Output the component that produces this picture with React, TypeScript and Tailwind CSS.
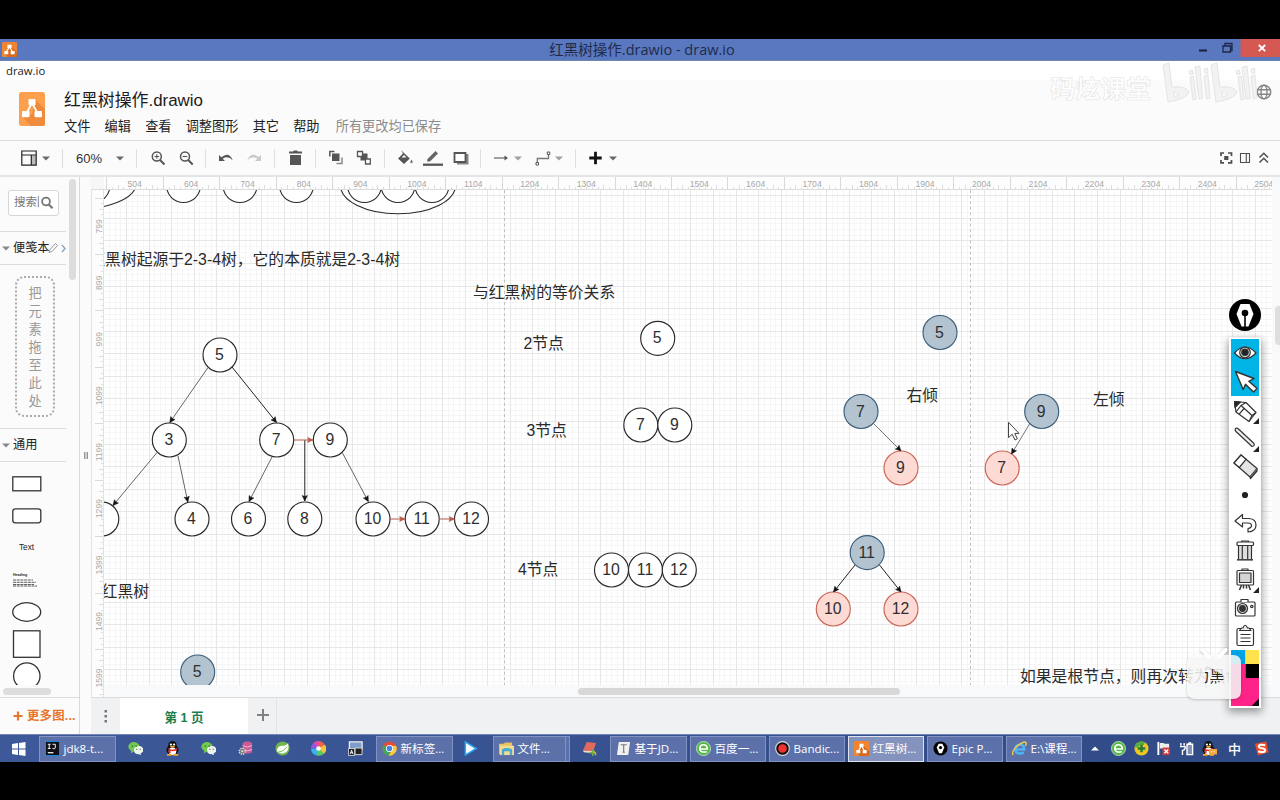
import React from "react";

type Tone = "plain" | "blue" | "red";
type DiagramNode = { x: number; y: number; label?: string; tone?: Tone };
type Edge = { from: [number, number]; to: [number, number]; color?: string };

const range = (n: number) => Array.from({ length: n }, (_, i) => i);

const tones: Record<Tone, { fill: string; stroke: string }> = {
  plain: { fill: "#ffffff", stroke: "#2a2a2a" },
  blue: { fill: "#b3c4d0", stroke: "#3c5f7c" },
  red: { fill: "#fedad5", stroke: "#cb6657" },
};

const nodes: DiagramNode[] = [
  { x: 220, y: 355, label: "5" },
  { x: 169.3, y: 440, label: "3" },
  { x: 276.7, y: 440, label: "7" },
  { x: 330.3, y: 440, label: "9" },
  { x: 101.8, y: 519 },
  { x: 192, y: 519, label: "4" },
  { x: 248.5, y: 519, label: "6" },
  { x: 304.8, y: 519, label: "8" },
  { x: 373, y: 519, label: "10" },
  { x: 422.2, y: 519, label: "11" },
  { x: 471.5, y: 519, label: "12" },
  { x: 657.7, y: 338.3, label: "5" },
  { x: 640.8, y: 425, label: "7" },
  { x: 674.8, y: 425, label: "9" },
  { x: 611.5, y: 570, label: "10" },
  { x: 645.5, y: 570, label: "11" },
  { x: 679.3, y: 570, label: "12" },
  { x: 197.7, y: 672, label: "5", tone: "blue" },
  { x: 940, y: 332.5, label: "5", tone: "blue" },
  { x: 861, y: 411.5, label: "7", tone: "blue" },
  { x: 901, y: 468, label: "9", tone: "red" },
  { x: 1041.7, y: 411.5, label: "9", tone: "blue" },
  { x: 1002.2, y: 468, label: "7", tone: "red" },
  { x: 867.2, y: 552.6, label: "11", tone: "blue" },
  { x: 833.3, y: 609, label: "10", tone: "red" },
  { x: 901, y: 609, label: "12", tone: "red" },
];

const edges: Edge[] = [
  { from: [208, 367.5], to: [169.8, 422.5], color: "#666" },
  { from: [232, 367], to: [276.5, 422.5], color: "#222" },
  { from: [157, 452.5], to: [113, 505.5], color: "#666" },
  { from: [178, 456], to: [187.8, 502], color: "#666" },
  { from: [272, 457], to: [249, 501.5], color: "#666" },
  { from: [342.5, 453], to: [368.3, 501.5], color: "#666" },
  { from: [304.8, 440], to: [304.8, 501], color: "#222" },
  { from: [294, 440], to: [313, 440], color: "#b55a4c" },
  { from: [390, 519], to: [405, 519], color: "#b55a4c" },
  { from: [439, 519], to: [454.5, 519], color: "#b55a4c" },
  { from: [874, 424], to: [901, 451], color: "#777" },
  { from: [1029.5, 424], to: [1011.5, 454], color: "#777" },
  { from: [855, 565], to: [833.5, 592], color: "#222" },
  { from: [879.5, 565], to: [901, 592], color: "#222" },
];

function EdgeLine({ from, to, color = "#222" }: Edge) {
  const angle = (Math.atan2(to[1] - from[1], to[0] - from[0]) * 180) / Math.PI;
  const head = color === "#b55a4c" ? color : "#111";
  return (
    <g>
      <line x1={from[0]} y1={from[1]} x2={to[0]} y2={to[1]} stroke={color} strokeWidth="1" />
      <path
        d="M0 0L-5.4 -2.6L-4.6 0L-5.4 2.6Z"
        fill={head}
        stroke={head}
        strokeWidth=".5"
        transform={`translate(${to[0]} ${to[1]}) rotate(${angle})`}
      />
    </g>
  );
}

function Label({ x, y, children, anchor = "start" }: { x: number; y: number; children: string; anchor?: "start" | "end" }) {
  return (
    <text x={x} y={y} textAnchor={anchor} fontSize="15.8" fill="#2a2a2a">
      {children}
    </text>
  );
}

const GRID = 22.58;

function gridPath(steps: number[], start: number, kind: "v" | "h") {
  return steps
    .map((i) => {
      const p = Math.floor(start + (GRID / 4) * i) + 0.5;
      return kind === "v" ? `M${p} 190V685` : `M104 ${p}H1272`;
    })
    .join("");
}

function Grid() {
  const cols = range(208);
  const rows = range(88);
  const isMajor = (i: number) => i % 4 === 0;
  return (
    <g fill="none" strokeWidth="1">
      <path d={gridPath(cols.filter((i) => !isMajor(i)), 103.9, "v") + gridPath(rows.filter((i) => !isMajor(i)), 195.7, "h")} stroke="#f6f6f6" />
      <path d={gridPath(cols.filter(isMajor), 103.9, "v") + gridPath(rows.filter(isMajor), 195.7, "h")} stroke="#e7e7e7" />
    </g>
  );
}

function Canvas() {
  return (
    <svg viewBox="104 190 1168 495" className="block h-[495px] w-[1168px] bg-white font-['Liberation_Sans','Noto_Sans_CJK_SC',sans-serif]">
      <Grid />
      <path d="M504.500 190V685M970.500 190V685" stroke="#c0c0c0" strokeDasharray="3 2.6" />
      <g fill="#fff" stroke="#2a2a2a" strokeWidth="1.1">
        <ellipse cx="75" cy="184" rx="61" ry="25.5" />
        <circle cx="93" cy="185.5" r="17" />
        <circle cx="183.5" cy="185.5" r="17" />
        <circle cx="240" cy="185.5" r="17" />
        <circle cx="296.5" cy="185.5" r="17" />
        <ellipse cx="398" cy="185.5" rx="57.5" ry="28.3" />
        <circle cx="364.5" cy="185.5" r="17" />
        <circle cx="398" cy="185.5" r="17" />
        <circle cx="432" cy="185.5" r="17" />
      </g>
      {nodes.map((n, i) => {
        const tone = tones[n.tone ?? "plain"];
        return (
          <g key={i}>
            <circle cx={n.x} cy={n.y} r="17" fill={tone.fill} stroke={tone.stroke} strokeWidth="1.15" />
            {n.label && (
              <text x={n.x - 0.5} y={n.y + 5} textAnchor="middle" fontSize="15.8" fill="#2f2f2f">
                {n.label}
              </text>
            )}
          </g>
        );
      })}
      {edges.map((e, i) => (
        <EdgeLine key={i} {...e} />
      ))}
      <Label x={400} y={265} anchor="end">红黑树起源于2-3-4树，它的本质就是2-3-4树</Label>
      <Label x={473} y={298}>与红黑树的等价关系</Label>
      <Label x={523.5} y={349}>2节点</Label>
      <Label x={526.5} y={435.500}>3节点</Label>
      <Label x={518} y={575}>4节点</Label>
      <Label x={149} y={596.500} anchor="end">红黑树</Label>
      <Label x={906.5} y={400.500}>右倾</Label>
      <Label x={1093} y={404.500}>左倾</Label>
      <Label x={1020} y={682}>如果是根节点，则再次转为黑色</Label>
      <path d="M1008.5 422.3V437.6L1012.2 434.3L1015 440L1017.3 438.8L1014.8 433.4H1019Z" fill="#fff" stroke="#444" strokeWidth="1" />
    </svg>
  );
}

function TopRuler() {
  return (
    <svg viewBox="91 177 1181 13" className="block h-[13px] w-[1181px] bg-[#fdfdfd] font-['Liberation_Sans',sans-serif]">
      <rect x="91" y="177" width="13" height="13" fill="#f6f6f6" />
      {range(21).map((k) => {
        const x = 106.9 + 56.46 * k;
        return (
          <g key={k}>
            <path d={`M${Math.floor(x) + 0.5} 177V190`} stroke="#d8d8d8" />
            {range(9).map((j) => (
              <path key={j} d={`M${Math.floor(x + 5.646 * (j + 1)) + 0.5} ${j % 2 ? 185 : 187}V190`} stroke="#dedede" />
            ))}
            <text x={x + 27.7} y="187.300" fontSize="8.600" textAnchor="middle" fill="#a8a8a8" stroke="#fdfdfd" strokeWidth="1.500" paintOrder="stroke">
              {504 + 100 * k}
            </text>
          </g>
        );
      })}
      <path d="M91 189.500H1272" stroke="#dcdcdc" />
    </svg>
  );
}

function SideRuler() {
  return (
    <svg viewBox="91 190 13 507" className="block h-[507px] w-[13px] bg-[#fdfdfd] font-['Liberation_Sans',sans-serif]">
      {range(9).map((k) => {
        const y = 198 + 56.46 * k;
        return (
          <g key={k}>
            <path d={`M95 ${Math.floor(y) + 0.5}H104`} stroke="#dadada" />
            {range(9).map((j) => (
              <path key={j} d={`M${j % 2 ? 99 : 101} ${Math.floor(y + 5.646 * (j + 1)) + 0.5}H104`} stroke="#dedede" />
            ))}
            <text transform={`translate(101.5 ${y + 28.3}) rotate(-90)`} fontSize="8.600" textAnchor="middle" fill="#a8a8a8" stroke="#fdfdfd" strokeWidth="1.500" paintOrder="stroke">
              {799 + 100 * k}
            </text>
          </g>
        );
      })}
      <path d="M103.500 190V697M91.500 190V697" stroke="#e2e2e2" />
    </svg>
  );
}

function DrawioGlyph({ className }: { className: string }) {
  return (
    <svg viewBox="0 0 16 16" className={className}>
      <rect width="16" height="16" rx="1" fill="#f08431" />
      <path d="M10 5L16 11V16H6L3 12Z" fill="#d9691c" />
      <path d="M8 5L4.5 11M8 5L11.500 11" stroke="#fff" strokeWidth="1.3" />
      <path d="M5.800 3H10.200V6.500H5.800ZM2.500 9.500H6.700V13H2.500ZM9.300 9.500H13.500V13H9.300Z" fill="#fff" />
    </svg>
  );
}

function TitleBar() {
  return (
    <div className="flex h-[22px] shrink-0 border-b border-[#7186ae] bg-[#5a78c0] text-[#202b4a]">
      <div className="flex w-[60px] items-start pl-[2px] pt-[3px]">
        <DrawioGlyph className="size-[15px]" />
      </div>
      <div className="flex-1 pl-[4px] text-center text-[14.500px] leading-[21px]">红黑树操作.drawio - draw.io</div>
      <svg viewBox="1190 39 90 21" className="-ml-[30px] h-[21px] w-[90px]">
        <rect x="1240.500" y="39" width="40" height="18" fill="#d45953" />
        <path d="M1199 50.500H1207" stroke="#1c2747" strokeWidth="2.200" />
        <path d="M1223 46H1230.500V52H1223ZM1225 45.500V43.500H1232V50.500H1230.500" stroke="#1c2747" strokeWidth="1.300" fill="none" />
        <path d="M1258.800 45L1265.200 51.200M1265.200 45L1258.800 51.200" stroke="#fff" strokeWidth="1.800" />
      </svg>
    </div>
  );
}

function Watermark() {
  return (
    <div className="absolute left-[1050px] top-[60px] flex h-[48px] w-[210px] items-start">
      <span className="w-[110px] pt-[16px] text-[25.300px] font-bold leading-[24px] text-white [-webkit-text-stroke:0.5px_#e2e2e2]">码炫课堂</span>
      <svg viewBox="1160 60 98 48" className="h-[48px] w-[98px]">
        <g fill="#f2f2f2" stroke="#e0e0e0" strokeWidth=".8" strokeLinejoin="round">
          <path d="M1163 65L1169 63L1172 87Q1187 86 1189 92Q1187 99 1168 102Z" />
          <path d="M1173.500 92L1179 94.500L1175 97Z" fill="#fff" />
          <path d="M1211 65L1217 63L1220 87Q1235 86 1237 92Q1235 99 1216 102Z" />
          <path d="M1222 92L1227.500 94.500L1223 97Z" fill="#fff" />
          <path d="M1190 77L1193.500 76L1196 99L1193 100ZM1195 67L1200 66L1202.500 98L1199 99ZM1204 76L1208 75L1210 98L1206.500 99ZM1189 71L1192.500 70L1193.300 74L1190 74.500ZM1204 69L1207.500 68L1208 73L1205 73.500Z" />
          <path d="M1238 77L1241.500 76L1244 99L1241 100ZM1242 67L1247 66L1250.500 98L1246 99ZM1251 76L1255 75L1257 98L1253.500 99ZM1236 71L1239.500 70L1240.300 74L1237 74.500ZM1251 69L1254.500 68L1255 73L1252 73.500Z" />
        </g>
      </svg>
    </div>
  );
}

function Header() {
  const menus = ["文件", "编辑", "查看", "调整图形", "其它", "帮助"];
  return (
    <div className="flex h-[61px] shrink-0 border-b border-[#dedede] bg-[#fbfbfb] text-[#1c1c1c]">
      <svg viewBox="0 0 26 34" className="ml-[19px] mt-[12px] h-[34px] w-[26px]">
        <rect width="26" height="34" rx="2.500" fill="#fca04d" />
        <path d="M16.500 8L26 17V31.500Q26 34 23.500 34H12L4 25.500L13 22Z" fill="#ee8b3d" />
        <path d="M13 11L7 22M13 11L19 22" stroke="#fff" strokeWidth="1.700" />
        <rect x="9.500" y="7" width="7" height="6.500" rx="1" fill="#fff" />
        <rect x="3" y="19" width="7.500" height="6.300" rx="1" fill="#fff" />
        <rect x="15.500" y="19" width="7.500" height="6.300" rx="1" fill="#fff" />
      </svg>
      <div className="ml-[19px] flex-1">
        <div className="mt-[10px] h-[22px] text-[16.900px] leading-[22px]">红黑树操作.drawio</div>
        <div className="mt-[5px] flex gap-[14.200px] text-[13.200px] leading-[19px]">
          {menus.map((m) => (
            <span key={m}>{m}</span>
          ))}
          <span className="ml-[2px] text-[#8b8b8b]">所有更改均已保存</span>
        </div>
      </div>
      <svg viewBox="0 0 16 16" className="mr-[8px] mt-[4px] size-[16px]" fill="none" stroke="#858585" strokeWidth="1.400">
        <circle cx="8" cy="8" r="6.700" />
        <ellipse cx="8" cy="8" rx="3" ry="6.700" />
        <path d="M1.500 5.700H14.500M1.500 10.300H14.500" />
      </svg>
    </div>
  );
}

function Caret({ className, color = "#6a6a6a" }: { className: string; color?: string }) {
  return (
    <svg viewBox="0 0 8 5" className={`h-[5px] w-[8px] shrink-0 ${className}`}>
      <path d="M0 .5H8L4 4.500Z" fill={color} />
    </svg>
  );
}

function Sep({ className }: { className: string }) {
  return <div className={`h-[19px] w-px shrink-0 bg-[#dfdfdf] ${className}`} />;
}

function Tool({ className, children, w = 16 }: { className: string; children: React.ReactNode; w?: number }) {
  return (
    <svg viewBox={`0 0 ${w} 18`} className={`h-[18px] shrink-0 ${className}`} fill="none" stroke="#555" strokeWidth="1.500">
      {children}
    </svg>
  );
}

function Toolbar() {
  return (
    <div className="flex h-[36px] shrink-0 items-center border-b-2 border-[#e4e4e4] bg-[#fbfbfb]">
      <Tool className="ml-[21px] w-[16px]">
        <path d="M10.500 6.500H15V16H10.500Z" fill="#bbb" stroke="none" />
        <path d="M.8 2H15.200V16.200H.8ZM.8 6H15.200M10.300 6V16" stroke="#222" strokeWidth="1.200" />
      </Tool>
      <Caret className="ml-[5px]" />
      <Sep className="ml-[12px]" />
      <span className="ml-[13px] w-[28px] pt-px font-['Liberation_Sans',sans-serif] text-[13px] text-[#333]">60%</span>
      <Caret className="ml-[12px]" />
      <Sep className="ml-[12px]" />
      <Tool className="ml-[14px] w-[16px]">
        <circle cx="5.800" cy="7.500" r="4.500" />
        <path d="M9 11L13.500 15.500" strokeWidth="2" />
        <path d="M3.500 7.500H8.100M5.800 5.200V9.800" strokeWidth="1.100" />
      </Tool>
      <Tool className="ml-[12px] w-[16px]">
        <circle cx="6" cy="7.500" r="4.500" />
        <path d="M9.200 11L13.700 15.500" strokeWidth="2" />
        <path d="M3.700 7.500H8.300" strokeWidth="1.100" />
      </Tool>
      <Sep className="ml-[10px]" />
      <Tool className="ml-[12px] w-[16px]">
        <path d="M1 6V12H7L4.700 9.700Q10 6 14.800 11.500Q11 2 3.400 8.300Z" fill="#555" stroke="none" />
      </Tool>
      <Tool className="ml-[12px] w-[16px]">
        <path d="M15 6V12H9L11.300 9.700Q6 6 1.200 11.500Q5 2 12.600 8.300Z" fill="#c8c8c8" stroke="none" />
      </Tool>
      <Sep className="ml-[12px]" />
      <Tool className="ml-[13px] w-[16px]">
        <path d="M1 2.500H5L6 1.500H9L10 2.500H14V4.500H1ZM2 6H13V16H2Z" fill="#555" stroke="none" />
      </Tool>
      <Sep className="ml-[11px]" />
      <Tool className="ml-[12px] w-[16px]">
        <path d="M1.800 7.500V2.500H6.500" />
        <path d="M4 4.500H11.500V12H4Z" fill="#555" stroke="none" />
        <path d="M14 8.500V14.500H8.500" stroke="#888" />
      </Tool>
      <Tool className="ml-[12px] w-[16px]">
        <path d="M6.500 4.500H11.500V11.500H4.500V7.500Z" fill="#555" stroke="none" />
        <path d="M1.500 2.500H6.500V7.500H1.500ZM9.500 10H14.300V15H9.500Z" fill="#fff" strokeWidth="1.300" />
      </Tool>
      <Sep className="ml-[12px]" />
      <Tool className="ml-[12px] w-[18px]" w={18}>
        <path d="M4 1L8 5L12.800 9.500L7 15L1 9.500L6 4.500Z" fill="#555" stroke="none" />
        <path d="M4.500 8.500L7 6L9.500 8.500Z" fill="#fbfbfb" stroke="none" />
        <path d="M14.500 10.500Q17 14 14.500 14.200Q12.200 14 14.500 10.500Z" fill="#777" stroke="none" />
      </Tool>
      <Tool className="ml-[8px] w-[20px]" w={20}>
        <path d="M4 12.500L4.500 10L12.500 2L15 4.500L7 12.500Z" fill="#666" stroke="none" />
        <path d="M0 15.700H20" strokeWidth="2.300" />
      </Tool>
      <Tool className="ml-[10px] w-[16px]">
        <path d="M4 5H15.500V15.500H4Z" fill="#888" stroke="none" />
        <path d="M1.500 4H12.500V13H1.500Z" fill="#fff" strokeWidth="1.800" />
      </Tool>
      <Sep className="ml-[11px]" />
      <Tool className="ml-[13px] w-[16px]">
        <path d="M0 9H12" stroke="#666" strokeWidth="1.200" />
        <path d="M10.500 6.500L14 9L10.500 11.500Z" fill="#555" stroke="none" />
      </Tool>
      <Caret className="ml-[4px]" color="#a0a0a0" />
      <Tool className="ml-[13px] w-[16px]">
        <path d="M2.300 14V9.500H13.500V5.500" stroke="#777" strokeWidth="1.300" />
        <path d="M1 13.500H3.500V16H1ZM12.300 3H14.800V5.500H12.300Z" fill="#fff" stroke="#555" strokeWidth="1" />
      </Tool>
      <Caret className="ml-[4px]" color="#a0a0a0" />
      <Sep className="ml-[12px]" />
      <Tool className="ml-[13px] w-[14px]" w={14}>
        <path d="M6.500 2.800V15.200M.300 9H12.700" stroke="#111" strokeWidth="2.800" />
      </Tool>
      <Caret className="ml-[6px]" />
      <svg viewBox="1218 149 54 18" className="ml-auto mr-[8px] h-[18px] w-[54px]" fill="none" stroke="#4f4f4f" strokeWidth="1.400">
        <path d="M1221 156V153H1224M1228 153H1231.500V156M1231.500 160V162.800H1228M1224 162.800H1221V160" strokeWidth="1.700" />
        <path d="M1224.200 156H1228.400V160H1224.200Z" fill="#4f4f4f" stroke="none" />
        <path d="M1240.500 153.500H1249.500V162.500H1240.500ZM1246.300 153.500V162.500" strokeWidth="1.100" />
        <path d="M1259.500 157.500L1263.800 153.300L1268 157.500M1259.500 162.500L1263.800 158.300L1268 162.500" strokeWidth="1.500" />
      </svg>
    </div>
  );
}

function Sidebar() {
  return (
    <div className="flex h-[557px] w-[80px] shrink-0 flex-col border-r border-[#d9d9d9] bg-[#fbfbfb]">
      <div className="flex h-[508px] shrink-0 overflow-hidden">
        <div className="w-[66px] shrink-0">
          <div className="ml-[8px] mt-[13px] flex h-[26px] w-[51px] items-center rounded-[3px] border border-[#d6d6d6] bg-white pl-[5px]">
            <span className="w-[25px] overflow-hidden whitespace-nowrap text-[11.500px] text-[#777]">搜索图形</span>
            <svg viewBox="0 0 14 14" className="ml-[1px] size-[14px] shrink-0" fill="none" stroke="#777">
              <circle cx="6" cy="5.500" r="3.900" strokeWidth="1.800" />
              <path d="M8.800 8.500L12.500 12.300" strokeWidth="2.200" />
            </svg>
          </div>
          <div className="mt-[15px] flex h-[34px] items-center overflow-hidden border-y border-[#dcdcdc] pl-[2px] text-[12.200px] text-[#222]">
            <Caret className="" color="#888" />
            <span className="ml-[3px] shrink-0">便笺本</span>
            <svg viewBox="0 0 18 12" className="-ml-[2px] h-[12px] w-[18px] shrink-0" fill="none" stroke="#999" strokeWidth="1">
              <path d="M1 10.500L2 7.500L7.500 1.500L9.500 3.500L4 9.500Z" />
              <path d="M14 3L17 6.500L14 10" stroke="#8ea9c0" strokeWidth="1.500" />
            </svg>
          </div>
          <div className="ml-[15px] mt-[11px] flex h-[141px] w-[40px] flex-col items-center rounded-[9px] border-2 border-dotted border-[#aaa] pt-[7px] text-[13.200px] leading-[18px] text-[#999]">
            {"把元素拖至此处".split("").map((c) => (
              <span key={c}>{c}</span>
            ))}
          </div>
          <div className="mt-[11px] flex h-[34px] items-center border-y border-[#dcdcdc] pl-[2px] text-[12.200px] text-[#222]">
            <Caret className="" color="#888" />
            <span className="ml-[3px]">通用</span>
          </div>
          <svg viewBox="0 462 66 224" className="block h-[224px] w-[66px] font-['Liberation_Sans',sans-serif]" fill="#fff" stroke="#333" strokeWidth="1.300">
            <rect x="12.800" y="476.800" width="28" height="14" />
            <rect x="12.800" y="508.800" width="28" height="14" rx="2.500" />
            <text x="26.500" y="550" fontSize="8.200" textAnchor="middle" fill="#222" stroke="none">Text</text>
            <text x="13" y="576" fontSize="3.600" fontWeight="bold" fill="#222" stroke="none">Heading</text>
            <path d="M13 580H33M13 582.300H36M13 584.500H34M13 586H37" strokeWidth=".8" strokeDasharray="3 .7" />
            <ellipse cx="26.700" cy="612" rx="14" ry="9.300" />
            <rect x="13.500" y="630.800" width="26.500" height="26.500" />
            <circle cx="26.800" cy="676" r="13.200" />
          </svg>
        </div>
        <div className="ml-[3px] mt-[2px] h-[101px] w-[7px] rounded-full bg-[#dddddd]" />
      </div>
      <div className="flex h-[12px] items-center">
        <div className="ml-[3px] h-[7px] w-[48px] rounded-full bg-[#dddddd]" />
      </div>
      <div className="flex flex-1 items-center border-t border-[#dcdcdc] pl-[13px] text-[12.400px] font-bold text-[#e8762c]">
        <svg viewBox="0 0 10 10" className="size-[10px]" stroke="#e8762c" strokeWidth="2.200">
          <path d="M5 .5V9.500M.5 5H9.500" />
        </svg>
        <span className="ml-[4px] whitespace-nowrap tracking-[0.200px]">更多图...</span>
      </div>
    </div>
  );
}

function PageTabs() {
  return (
    <div className="flex h-[37px] shrink-0 border-t border-[#dcdcdc] bg-[#f0f1f3]">
      <svg viewBox="0 0 29 36" className="h-[36px] w-[29px]" fill="#777">
        <path d="M13.500 12H16V14.500H13.500ZM13.500 17H16V19.500H13.500ZM13.500 22H16V24.500H13.500Z" />
      </svg>
      <div className="flex w-[128px] items-center justify-center bg-white pt-[4px] text-[12.600px] font-bold text-[#1c7d4d]">第 1 页</div>
      <div className="flex w-[29px] items-center border-r border-[#e2e4e6] pb-[2px] pl-[9px]">
        <svg viewBox="0 0 12 12" className="size-[12px]" stroke="#808080" strokeWidth="2">
          <path d="M6 0V12M0 6H12" />
        </svg>
      </div>
    </div>
  );
}

function EpicPen() {
  return (
    <svg viewBox="1215 290 65 430" className="pointer-events-none absolute left-[1215px] top-[290px] h-[430px] w-[65px] overflow-visible">
      <defs>
        <filter id="shade" x="-60%" y="-10%" width="220%" height="120%">
          <feGaussianBlur stdDeviation="4" />
        </filter>
      </defs>
      <rect x="1228" y="340" width="34" height="372" fill="#000" opacity=".38" filter="url(#shade)" />
      <circle cx="1245" cy="315" r="16" fill="#000" />
      <path d="M1240.500 304H1249.500L1253.500 314L1248.500 326.500H1241.500L1236.500 314Z" fill="#fff" />
      <circle cx="1245" cy="313" r="3.300" fill="#000" />
      <path d="M1245 315V327" stroke="#000" strokeWidth="1.600" />
      <rect x="1229" y="337.500" width="32" height="370.500" fill="#fff" />
      <rect x="1231" y="339" width="28" height="57" fill="#00b4e6" />
      <g stroke="#333" strokeWidth="1.200" fill="#fff" strokeLinejoin="round">
        <path d="M1234.500 353Q1245 341 1256 353Q1245 364.500 1234.500 353Z" />
        <circle cx="1245" cy="352.500" r="5.300" fill="#ddd" />
        <circle cx="1245" cy="352.300" r="3.200" fill="#222" />
        <path d="M1235.500 371.500L1254 378.500L1248.800 381.300L1257 388.500L1253.500 392L1245.500 384.300L1243.200 389.500Z" strokeWidth="1.400" />
        <path d="M1234.500 401.500L1246 402.500L1256 412.500L1249 421.500L1236 412Z" />
        <path d="M1234.500 401.500L1240.500 402L1235 407.500Z" fill="#222" />
        <path d="M1246 402.500L1241 405.500L1252 415.500L1256 412.500M1241 405.500L1236 412M1244 408.500L1239 414.300M1252 415.500L1249 421.500" fill="none" />
        <path d="M1235.500 428.500Q1237 427.500 1238.500 429L1254 443.500Q1255 446 1252 446.500L1236 431.500Q1234.500 430 1235.500 428.500Z" fill="#eee" />
        <path d="M1241 455L1257 468.500L1250 477L1234 463Z" fill="#e4e4e4" />
        <path d="M1241 455L1246 459.300L1239.300 467.500L1234 463Z" />
        <path d="M1257 468.500V471L1250.500 478.500L1250 477" fill="#777" />
        <path d="M1235 521L1242.500 514.500V518.500H1249Q1256 519 1256 525Q1256 531.500 1248 532V528.500Q1251.500 528 1251.500 525.500Q1251.500 523 1248 523H1242.500V527Z" />
        <path d="M1238.500 545.500H1251.500V559.500H1238.500ZM1241.500 542V541H1248.500V542" fill="#ddd" />
        <rect x="1237" y="542" width="16.500" height="3.500" rx="1" />
        <path d="M1242.300 546V559M1247.700 546V559" />
        <rect x="1237" y="559" width="16" height="1.600" fill="#444" stroke="none" />
        <path d="M1241.500 585L1239.500 590M1248.500 585L1250.500 590M1243.500 585V588.500M1246.500 585V588.500" strokeWidth="1.500" />
        <rect x="1237" y="570.500" width="16.500" height="14.500" rx="1" />
        <rect x="1239.500" y="573" width="11.500" height="9.500" fill="#d4d4d4" />
        <path d="M1242 570V569H1248V570" />
        <rect x="1235.500" y="602" width="19.500" height="14" rx="1" />
        <path d="M1241 602V599.500H1248V602" />
        <circle cx="1242.500" cy="608.500" r="5" fill="#ddd" />
        <circle cx="1242.500" cy="608.500" r="2.800" fill="#333" />
        <circle cx="1251.800" cy="606.500" r="1.200" />
        <rect x="1237" y="628.500" width="16.500" height="17" rx="1.500" />
        <path d="M1239.500 630.500L1241.500 628H1243Q1245 622.500 1247.500 628H1249L1251 630.500Z" fill="#eee" />
        <path d="M1240.500 634.500H1250.500M1240.500 638H1250.500M1240.500 641.500H1250.500" />
      </g>
      <circle cx="1245" cy="495" r="3.100" fill="#222" />
      <path d="M1259 418V424H1253ZM1259 446V452H1253ZM1259 587V593H1253Z" fill="#222" />
      <rect x="1231" y="650" width="14.500" height="14" fill="#00a2e8" />
      <rect x="1245.500" y="650" width="13.500" height="14" fill="#ffe34d" />
      <path d="M1231 664H1245.500V678H1259V706H1231Z" fill="#ff2288" />
      <rect x="1245.500" y="664" width="13.500" height="14" fill="#000" />
      <path d="M1259 698.500V706H1251.500Z" fill="#111" />
    </svg>
  );
}

function PlayerBadge() {
  return (
    <svg viewBox="1180 645 68 60" className="pointer-events-none absolute left-[1180px] top-[645px] h-[60px] w-[68px] drop-shadow-[0_1px_1px_rgba(0,0,0,.25)]">
      <path d="M1202.500 650L1209 657M1225.500 650L1219 657" stroke="#fff" strokeWidth="4" strokeLinecap="round" />
      <path
        fillRule="evenodd"
        d="M1195 655H1233Q1241 655 1241 663V691Q1241 699 1233 699H1195Q1187 699 1187 691V663Q1187 655 1195 655ZM1205 669.500V685.500Q1205 689.500 1209 687.500L1223 680Q1226 677.500 1223 675L1209 667Q1205 665.500 1205 669.500Z"
        fill="#fff"
        opacity=".84"
      />
    </svg>
  );
}

type IconName = "idea" | "wechat" | "qq" | "db" | "leaf" | "wheel" | "window" | "chrome" | "play" | "folder" | "book" | "typora" | "e360" | "rec" | "epic" | "ie" | "plus" | "flag" | "battery" | "sogou";

function AppIcon({ name }: { name: IconName }) {
  const art: Record<IconName, React.ReactNode> = {
    idea: (
      <>
        <rect width="16" height="16" fill="#1591e8" />
        <path d="M1 1H15V15H1Z" fill="#101018" />
        <path d="M3 3.500H6M4.500 3.500V8M3 8H6M8 3.500H11V7.500Q10 9 8 8" stroke="#fff" fill="none" />
        <path d="M3 12.500H9" stroke="#fff" strokeWidth="1.300" />
      </>
    ),
    wechat: (
      <>
        <path d="M.5 7A6 5 0 1 1 7 11L3 13L3.500 10.500Q.5 9 .5 7Z" fill="#72c94f" />
        <path d="M6.500 10A5 4 0 1 1 13.500 13L14 15L11.500 14Q6.500 14 6.500 10Z" fill="#edf3ed" />
        <path d="M4 5.500H5.500M8 5.500H9.500M9 9H10M12.500 9H13.500" stroke="#386b33" strokeWidth="1.300" />
      </>
    ),
    qq: (
      <>
        <ellipse cx="8" cy="9.500" rx="6.500" ry="5.500" fill="#111" />
        <ellipse cx="8" cy="5" rx="4.500" ry="5" fill="#111" />
        <ellipse cx="8" cy="11" rx="4" ry="4" fill="#fff" />
        <circle cx="6.300" cy="3.800" r="1.200" fill="#fff" />
        <circle cx="9.700" cy="3.800" r="1.200" fill="#fff" />
        <ellipse cx="8" cy="6" rx="2.500" ry=".9" fill="#f5a623" />
        <path d="M3 7.500Q8 11 13 7.500V9.500Q9 11.500 6 10.500V13H4V9.500Z" fill="#e33128" />
        <path d="M2 14.800H7M9 14.800H14" stroke="#f5a623" strokeWidth="2" />
      </>
    ),
    db: (
      <>
        <path d="M5 2Q10 -1 15 2V12Q10 15 5 12Z" fill="#cf5b93" />
        <path d="M5 5Q10 8 15 5M5 9Q10 12 15 9" stroke="#f4bad5" fill="none" />
        <circle cx="4.500" cy="11" r="3.200" fill="#777" stroke="#ddd" strokeWidth="1.500" strokeDasharray="1.500 1" />
        <circle cx="4.500" cy="11" r="1.200" fill="#ddd" />
      </>
    ),
    leaf: (
      <>
        <circle cx="8" cy="8" r="7.500" fill="#72b74b" />
        <path d="M2 11Q2 5 8 5Q12 5 14 2Q16 12 9 13Q5 14 2 11Z" fill="#fff" />
        <path d="M3 12Q9 12 13 6" stroke="#72b74b" fill="none" />
      </>
    ),
    wheel: (
      <>
        <path d="M8 8V0A8 8 0 0 1 15 5Z" fill="#f46444" />
        <path d="M8 8L15 4A8 8 0 0 1 13.500 14Z" fill="#f5c63b" />
        <path d="M8 8L14 13A8 8 0 0 1 5 15Z" fill="#5ec95c" />
        <path d="M8 8L6 15.500A8 8 0 0 1 0 8Z" fill="#36b3ee" />
        <path d="M8 8H0A8 8 0 0 1 4 1Z" fill="#8c59df" />
        <path d="M8 8L3 1.800A8 8 0 0 1 9 0Z" fill="#e94a9c" />
        <circle cx="8" cy="8" r="2.500" fill="#fff" />
      </>
    ),
    window: (
      <>
        <path d="M1.500 1H15V9H1.500Z" fill="#7e9ccc" stroke="#eee" strokeWidth="1.400" />
        <path d="M7.500 7.500H15V14.500H7.500Z" fill="#222" stroke="#ddd" />
        <path d="M.5 8H7V15.500H.5Z" fill="#222" stroke="#eee" strokeWidth=".8" />
        <path d="M2.300 14L3.800 9.800L5.300 14M2.800 12.500H4.800" stroke="#fff" fill="none" />
      </>
    ),
    chrome: (
      <>
        <circle cx="8" cy="8" r="7.500" fill="#e64a3b" />
        <path d="M8 8L1.500 4.200A7.500 7.500 0 0 0 7 15.500L11 9Z" fill="#42a65a" />
        <path d="M8 5H15A7.500 7.500 0 0 1 7 15.500L11 9Z" fill="#f8cd3b" />
        <circle cx="8" cy="8" r="3.800" fill="#fff" />
        <circle cx="8" cy="8" r="2.900" fill="#4384e8" />
      </>
    ),
    play: <path d="M2.500 1L14 8L2.500 15Z" fill="#fff" stroke="#28a8f5" strokeWidth="1.600" />,
    folder: (
      <>
        <path d="M0 3H5L6.500 1.500H14V14H0Z" fill="#e7c263" />
        <path d="M1 5H16V15H1Z" fill="#f3dc8d" />
        <path d="M3 15V9Q8 6 14 9V15H11.500V11H5.500V15Z" fill="#46a9d8" />
      </>
    ),
    book: (
      <>
        <path d="M5 1L15 2L12 11L1 10Z" fill="#e06a5e" />
        <path d="M1 10L12 11L11 13L2 12Z" fill="#f4d8c7" />
        <path d="M11.500 9V16M8 12.500H15" stroke="#65b64b" strokeWidth="1.600" />
        <path d="M12.500 10.500L15 15" stroke="#edaf34" strokeWidth="1.500" />
      </>
    ),
    typora: (
      <>
        <path d="M3 1H15L13 15H1Z" fill="#f1f1f1" />
        <path d="M5 4H11.500M8.200 4V12M7 12H9.500" stroke="#777" strokeWidth="1.200" />
      </>
    ),
    e360: (
      <>
        <circle cx="8" cy="8" r="7.500" fill="#56b848" stroke="#d5efcf" strokeWidth=".8" />
        <path d="M4 8.500H12Q12 4 8 4Q4 4 4 8.500Q4.500 13 11.500 11.500" stroke="#fff" strokeWidth="1.800" fill="none" />
      </>
    ),
    rec: (
      <>
        <circle cx="8" cy="8" r="7.300" fill="#111" stroke="#ddd" strokeWidth="1.200" />
        <circle cx="8" cy="8" r="4.600" fill="#f13131" />
      </>
    ),
    epic: (
      <>
        <circle cx="8" cy="8" r="7.500" fill="#000" />
        <path d="M6 3H10L12 7L9.500 13H6.500L4 7Z" fill="#fff" />
        <circle cx="8" cy="7" r="1.700" />
      </>
    ),
    ie: (
      <>
        <path d="M3 9H13Q13 4 8.500 4Q4 4 3.500 9Q4 15 12.500 12.500" stroke="#4fb4f2" strokeWidth="2.700" fill="none" />
        <path d="M1 15Q-1 11 6 5Q14 -1 15 2Q15.500 4 14 5" stroke="#f0c84b" strokeWidth="1.600" fill="none" />
      </>
    ),
    plus: (
      <>
        <circle cx="8" cy="8" r="7.500" fill="#f2c81f" />
        <path d="M.5 7A7.500 7.500 0 0 1 12 1.700L10 4.500A5 5 0 0 0 4 7Z" fill="#53ae43" />
        <path d="M8 4V12M4 8H12" stroke="#247b36" strokeWidth="2.600" />
      </>
    ),
    flag: (
      <>
        <path d="M2.500 1V15" stroke="#fff" strokeWidth="2" />
        <path d="M4 2H8L9 3H14V9H9L8 8H4Z" fill="#eee" />
        <path d="M7 7H15V15H7Z" fill="#d63738" />
        <path d="M9 9L13 13M13 9L9 13" stroke="#fff" strokeWidth="1.500" />
      </>
    ),
    battery: (
      <>
        <path d="M8.500 3.500H14.500V14.500H8.500ZM10 2H13" stroke="#fff" strokeWidth="1.500" fill="#8190b3" />
        <path d="M2 2V5M5.500 2V5M1 6H6.500V8Q6 10 3.700 10V15" stroke="#fff" strokeWidth="1.500" fill="none" />
      </>
    ),
    sogou: (
      <>
        <path d="M1 3L13 .5L15.500 12L4 15.500Z" fill="#ee4b25" />
        <path d="M12 4.500Q5 3 5 6Q6 8 10 8Q13 9 11 11.500Q8 12.500 4.500 11" stroke="#fff" strokeWidth="2.200" fill="none" />
      </>
    ),
  };
  return (
    <svg viewBox="0 0 16 16" className="size-[15px] shrink-0">
      {art[name]}
    </svg>
  );
}

function QqMessageIcon() {
  return (
    <div className="relative flex">
      <AppIcon name="qq" />
      <svg viewBox="0 0 8 7" className="absolute -right-px bottom-0 h-[7px] w-[8px]">
        <path d="M0 0H8V5.500H4L2.500 7V5.500H0Z" fill="#f4a63a" />
        <path d="M2 2.800H6" stroke="#fff" strokeDasharray="1 .6" />
      </svg>
    </div>
  );
}

function TaskButton({ icon, label, className, active }: { icon: IconName | "drawio"; label: string; className: string; active?: boolean }) {
  return (
    <div
      className={`flex h-[26px] shrink-0 items-center gap-[3.500px] overflow-hidden whitespace-nowrap border pl-[5px] text-[11.600px] text-white ${
        active ? "border-[#dce3f2] bg-[#8493bd]" : "border-[#8292c3] bg-[#5c71aa]"
      } ${className}`}
    >
      {icon === "drawio" ? <DrawioGlyph className="size-[15px] shrink-0" /> : <AppIcon name={icon} />}
      <span>{label}</span>
    </div>
  );
}

function Taskbar() {
  const pinned: IconName[] = ["wechat", "qq", "wechat", "db", "leaf", "wheel", "window"];
  const tray: IconName[] = ["e360", "plus", "flag", "battery"];
  return (
    <div className="flex h-[28px] shrink-0 items-center border-t border-[#7186b5] bg-gradient-to-r from-[#3e5999] to-[#304a86]">
      <svg viewBox="0 0 14 14" className="ml-[12px] mr-[13px] size-[14px] shrink-0" fill="#fff">
        <path d="M0 2L6 1V6.500H0ZM7 .9L13.500 0V6.500H7ZM0 7.500H6V13L0 12ZM7 7.500H13.500V14L7 13Z" />
      </svg>
      <TaskButton icon="idea" label="jdk8-t..." className="w-[77px]" />
      <div className="ml-[12px] flex w-[248px] shrink-0 gap-[21.700px]">
        {pinned.map((p, i) => (
          <AppIcon key={i} name={p} />
        ))}
      </div>
      <TaskButton icon="chrome" label="新标签..." className="w-[77px]" />
      <div className="flex w-[40px] shrink-0 justify-center pr-[5px]">
        <AppIcon name="play" />
      </div>
      <TaskButton icon="folder" label="文件..." className="w-[73px]" />
      <div className="h-[26px] w-[4px] shrink-0 border border-l-0 border-[#8292c3] bg-[#5c71aa]" />
      <div className="flex w-[40px] shrink-0 justify-center pr-[2px]">
        <AppIcon name="book" />
      </div>
      <TaskButton icon="typora" label="基于JD..." className="w-[77px]" />
      <TaskButton icon="e360" label="百度一..." className="ml-[3px] w-[76px]" />
      <TaskButton icon="rec" label="Bandic..." className="ml-[3px] w-[76px]" />
      <TaskButton icon="drawio" label="红黑树..." className="ml-[3px] w-[76px]" active />
      <TaskButton icon="epic" label="Epic P..." className="ml-[3px] w-[76px]" />
      <TaskButton icon="ie" label="E:\课程..." className="ml-[3px] w-[76px]" />
      <svg viewBox="0 0 8 5" className="ml-[9px] h-[5px] w-[8px] shrink-0" fill="#fff">
        <path d="M0 4.500L4 .5L8 4.500Z" />
      </svg>
      <div className="ml-[12px] flex gap-[7.500px]">
        {tray.map((t) => (
          <AppIcon key={t} name={t} />
        ))}
        <QqMessageIcon />
      </div>
      <span className="ml-[12px] mr-[13px] text-[13px] font-medium leading-[20px] text-white">中</span>
      <AppIcon name="sogou" />
    </div>
  );
}

export default function App() {
  return (
    <div className="relative flex h-[800px] w-[1280px] flex-col overflow-hidden bg-black pt-[39px] font-['Open_Sans','Noto_Sans_CJK_SC',sans-serif]">
      <TitleBar />
      <div className="h-[19px] shrink-0 bg-white pl-[6px] text-[11.300px] leading-[19px] text-[#222]">draw.io</div>
      <div className="flex flex-col font-['Liberation_Sans','Noto_Sans_CJK_SC',sans-serif]">
        <Header />
        <Toolbar />
        <div className="flex h-[557px] bg-[#fbfbfb]">
          <Sidebar />
          <div className="flex w-[11px] shrink-0 items-center justify-center">
            <svg viewBox="0 0 4 7" className="h-[7px] w-[4px]">
              <path d="M.8 0V7M3.200 0V7" stroke="#666" />
            </svg>
          </div>
          <div className="flex w-[1189px] flex-col">
            <div className="flex h-[520px]">
              <div className="flex w-[1181px] flex-col">
                <TopRuler />
                <div className="flex">
                  <SideRuler />
                  <div className="flex w-[1168px] flex-col">
                    <Canvas />
                    <div className="flex h-[12px] items-center bg-[#f8f9fa]">
                      <div className="ml-[474px] h-[7px] w-[322px] rounded-full bg-[#d8d8d8]" />
                    </div>
                  </div>
                </div>
              </div>
              <div className="w-[8px] bg-[#f8f9fa] pt-[129px]">
                <div className="ml-[3px] h-[39px] w-[5px] rounded-l bg-[#dedede]" />
              </div>
            </div>
            <PageTabs />
          </div>
        </div>
      </div>
      <Taskbar />
      <Watermark />
      <EpicPen />
      <PlayerBadge />
    </div>
  );
}
